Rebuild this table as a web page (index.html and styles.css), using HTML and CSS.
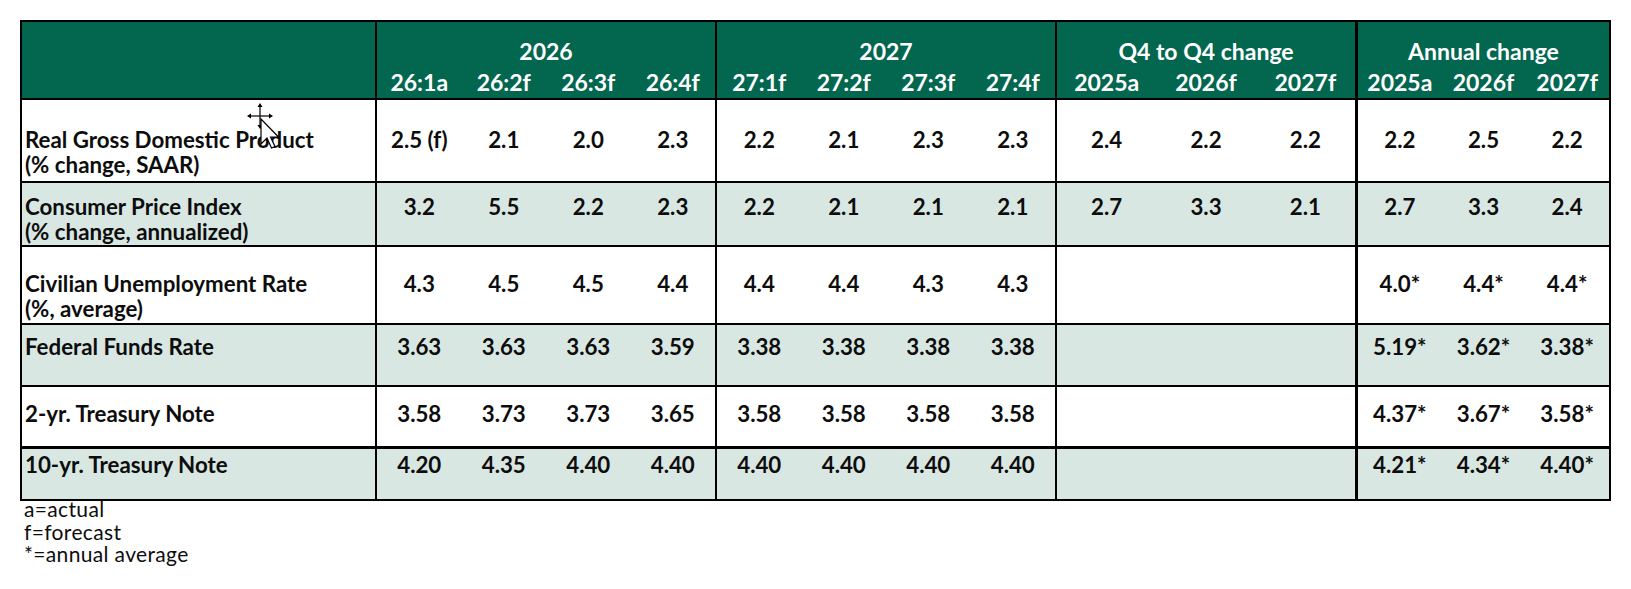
FILE: index.html
```html
<!DOCTYPE html>
<html lang="en">
<head>
<meta charset="utf-8">
<title>Economic Forecast Table</title>
<link rel="stylesheet" href="styles.css">
</head>
<body>
<div class="page">
  <div class="sheet">
    <div class="row head">
      <div class="label"></div>
      <div class="group g4">
        <div class="title">2026</div>
        <div class="cells"><span>26:1a</span><span>26:2f</span><span>26:3f</span><span>26:4f</span></div>
      </div>
      <div class="group g4">
        <div class="title">2027</div>
        <div class="cells"><span>27:1f</span><span>27:2f</span><span>27:3f</span><span>27:4f</span></div>
      </div>
      <div class="group g3 q4">
        <div class="title">Q4 to Q4 change</div>
        <div class="cells"><span>2025a</span><span>2026f</span><span>2027f</span></div>
      </div>
      <div class="group g3 annual">
        <div class="title">Annual change</div>
        <div class="cells"><span>2025a</span><span>2026f</span><span>2027f</span></div>
      </div>
    </div>

    <div class="row r1">
      <div class="label">Real Gross Domestic Product<br>(% change, SAAR)</div>
      <div class="group g4"><div class="cells"><span>2.5 (f)</span><span>2.1</span><span>2.0</span><span>2.3</span></div></div>
      <div class="group g4"><div class="cells"><span>2.2</span><span>2.1</span><span>2.3</span><span>2.3</span></div></div>
      <div class="group g3 q4"><div class="cells"><span>2.4</span><span>2.2</span><span>2.2</span></div></div>
      <div class="group g3 annual"><div class="cells"><span>2.2</span><span>2.5</span><span>2.2</span></div></div>
    </div>

    <div class="row r2 tint">
      <div class="label">Consumer Price Index<br>(% change, annualized)</div>
      <div class="group g4"><div class="cells"><span>3.2</span><span>5.5</span><span>2.2</span><span>2.3</span></div></div>
      <div class="group g4"><div class="cells"><span>2.2</span><span>2.1</span><span>2.1</span><span>2.1</span></div></div>
      <div class="group g3 q4"><div class="cells"><span>2.7</span><span>3.3</span><span>2.1</span></div></div>
      <div class="group g3 annual"><div class="cells"><span>2.7</span><span>3.3</span><span>2.4</span></div></div>
    </div>

    <div class="row r3">
      <div class="label">Civilian Unemployment Rate<br>(%, average)</div>
      <div class="group g4"><div class="cells"><span>4.3</span><span>4.5</span><span>4.5</span><span>4.4</span></div></div>
      <div class="group g4"><div class="cells"><span>4.4</span><span>4.4</span><span>4.3</span><span>4.3</span></div></div>
      <div class="group g3 q4"><div class="cells"></div></div>
      <div class="group g3 annual"><div class="cells"><span>4.0*</span><span>4.4*</span><span>4.4*</span></div></div>
    </div>

    <div class="row r4 tint">
      <div class="label">Federal Funds Rate</div>
      <div class="group g4"><div class="cells"><span>3.63</span><span>3.63</span><span>3.63</span><span>3.59</span></div></div>
      <div class="group g4"><div class="cells"><span>3.38</span><span>3.38</span><span>3.38</span><span>3.38</span></div></div>
      <div class="group g3 q4"><div class="cells"></div></div>
      <div class="group g3 annual"><div class="cells"><span>5.19*</span><span>3.62*</span><span>3.38*</span></div></div>
    </div>

    <div class="row r5">
      <div class="label">2-yr. Treasury Note</div>
      <div class="group g4"><div class="cells"><span>3.58</span><span>3.73</span><span>3.73</span><span>3.65</span></div></div>
      <div class="group g4"><div class="cells"><span>3.58</span><span>3.58</span><span>3.58</span><span>3.58</span></div></div>
      <div class="group g3 q4"><div class="cells"></div></div>
      <div class="group g3 annual"><div class="cells"><span>4.37*</span><span>3.67*</span><span>3.58*</span></div></div>
    </div>

    <div class="row r6 tint">
      <div class="label">10-yr. Treasury Note</div>
      <div class="group g4"><div class="cells"><span>4.20</span><span>4.35</span><span>4.40</span><span>4.40</span></div></div>
      <div class="group g4"><div class="cells"><span>4.40</span><span>4.40</span><span>4.40</span><span>4.40</span></div></div>
      <div class="group g3 q4"><div class="cells"></div></div>
      <div class="group g3 annual"><div class="cells"><span>4.21*</span><span>4.34*</span><span>4.40*</span></div></div>
    </div>

    <svg class="cursor" width="34" height="46" viewBox="0 0 34 46" aria-hidden="true">
      <g stroke="#000" stroke-width="1.2" fill="none">
        <line x1="13" y1="2" x2="13" y2="24"/>
        <line x1="2" y1="13" x2="24" y2="13"/>
      </g>
      <g fill="#000">
        <polygon points="13,0 10.5,4 15.5,4"/>
        <polygon points="13,26 10.5,22 15.5,22"/>
        <polygon points="0,13 4,10.5 4,15.5"/>
        <polygon points="26,13 22,10.5 22,15.5"/>
      </g>
      <polygon points="14,16 14,41 20,35 24.5,45 28,43.5 23.5,34 31.5,34" fill="#fff" stroke="#000" stroke-width="1.2" stroke-linejoin="miter"/>
    </svg>
  </div>

  <div class="notes">
    <div class="note">a=actual</div>
    <div class="note">f=forecast</div>
    <div class="note">*=annual average</div>
  </div>
</div>
</body>
</html>
```

FILE: styles.css
```css
html, body {
  margin: 0;
  padding: 0;
  background: #ffffff;
}

body {
  font-family: Lato, "Open Sans", "Liberation Sans", sans-serif;
  color: #0d0d0d;
}

.page {
  padding: 20px 0 0 20px;
}

.sheet {
  position: relative;
  width: 1591px;
  box-sizing: border-box;
  border: 2px solid #000;
}

.row {
  display: grid;
  grid-template-columns: 353px 340px 340px 300px 254px;
  box-sizing: border-box;
  border-bottom: 2px solid #000;
  font-weight: 700;
  font-size: 22.3px;
  line-height: 25px;
}

.row:last-of-type {
  border-bottom: none;
}

.tint {
  background: #d9e7e3;
}

.label {
  padding-left: 3px;
  white-space: nowrap;
}

.group {
  border-left: 2px solid #000;
}

.group.annual {
  border-left-width: 3px;
}

.cells {
  display: grid;
  text-align: center;
  white-space: nowrap;
}

.g4 .cells {
  grid-template-columns: repeat(4, 1fr);
}

.g3 .cells {
  grid-template-columns: repeat(3, 1fr);
}

/* header */
.head {
  background: #03664f;
  color: #ffffff;
  height: 78px;
  font-size: 23px;
}

.head .group {
  padding-top: 17px;
}

.head .title {
  text-align: center;
  height: 31px;
}

/* body rows: heights include bottom border */
.r1 { height: 83px; }
.r2 { height: 64px; }
.r3 { height: 78px; }
.r4 { height: 62px; }
.r5 { height: 62px; border-bottom-width: 3px; }
.r6 { height: 50px; }

.r1 > div { padding-top: 27px; }
.r2 > div { padding-top: 11px; }
.r3 > div { padding-top: 24px; }
.r4 > div { padding-top: 9px; }
.r5 > div { padding-top: 14px; }
.r6 > div { padding-top: 3px; }

.cursor {
  position: absolute;
  left: 225px;
  top: 81px;
}

.notes {
  margin-top: -3px;
  padding-left: 4px;
  font-size: 21px;
  letter-spacing: 0.35px;
  line-height: 22.5px;
  font-weight: 400;
}
```
